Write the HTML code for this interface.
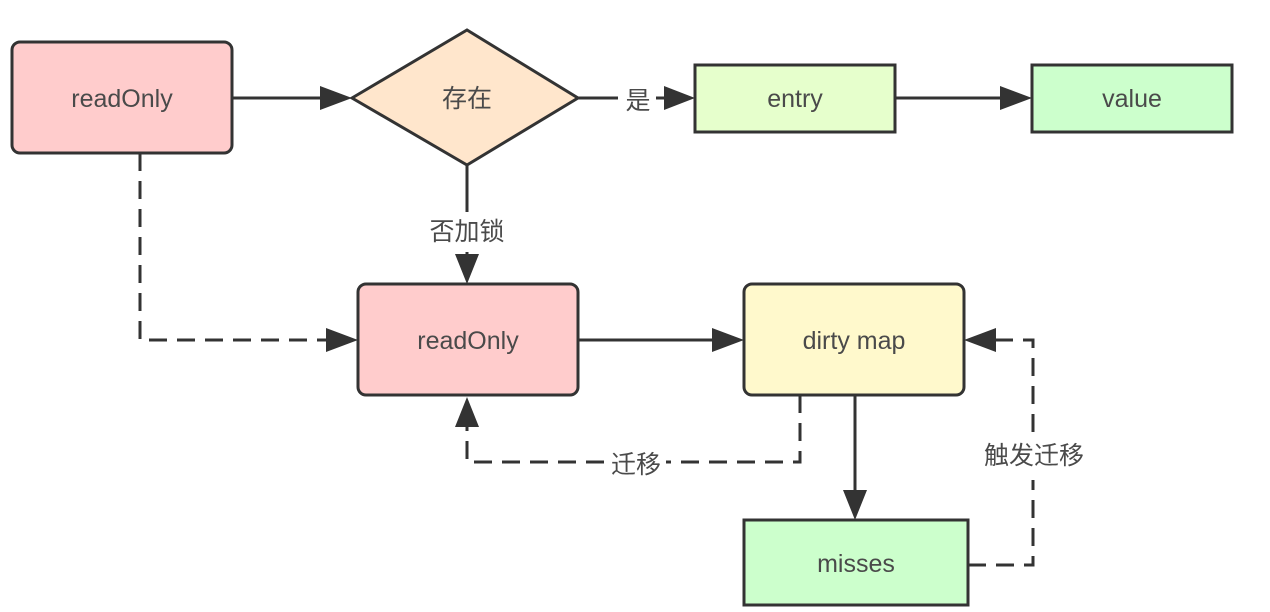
<!DOCTYPE html>
<html><head><meta charset="utf-8"><style>
html,body{margin:0;padding:0;background:#fff;}
svg{display:block}
text{font-family:"Liberation Sans","Noto Sans CJK SC",sans-serif;font-size:25px;fill:#4a4a4a;text-anchor:middle;dominant-baseline:central}
</style></head><body>
<svg width="1270" height="612" viewBox="0 0 1270 612" xmlns="http://www.w3.org/2000/svg">
<g stroke="#333" stroke-width="3">
<rect x="12" y="42" width="220" height="111" rx="8" fill="#ffcccc"/>
<polygon points="352,98 467,30 578,98 467,165" fill="#ffe6cc"/>
<rect x="695" y="65" width="200" height="67" fill="#e6ffcc"/>
<rect x="1032" y="65" width="200" height="67" fill="#ccffcc"/>
<rect x="358" y="284" width="220" height="111" rx="8" fill="#ffcccc"/>
<rect x="744" y="284" width="220" height="111" rx="8" fill="#fff9cc"/>
<rect x="744" y="520" width="224" height="85" fill="#ccffcc"/>
</g>
<g stroke="#333" stroke-width="3" fill="none">
<line x1="232" y1="98" x2="322" y2="98"/>
<line x1="578" y1="98" x2="618" y2="98"/>
<line x1="656" y1="98" x2="668" y2="98"/>
<line x1="895" y1="98" x2="1000" y2="98"/>
<line x1="467" y1="165" x2="467" y2="212"/>
<line x1="467" y1="252" x2="467" y2="256"/>
<line x1="578" y1="340" x2="714" y2="340"/>
<line x1="855" y1="395" x2="855" y2="490"/>
<g stroke-dasharray="18,10">
<polyline points="140,153 140,340 328,340"/>
<polyline points="800,395 800,462 666,462"/>
<polyline points="604,462 467,462 467,425"/>
<polyline points="968,565 1033,565 1033,480"/>
<polyline points="1033,432 1033,340 996,340"/>
</g>
</g>
<g fill="#333">
<polygon points="352,98 320,86 320,110"/>
<polygon points="695,98 664,86 664,110"/>
<polygon points="1032,98 1000,86 1000,110"/>
<polygon points="467,284 455,254 479,254"/>
<polygon points="358,340 326,328 326,352"/>
<polygon points="744,340 712,328 712,352"/>
<polygon points="855,520 843,490 867,490"/>
<polygon points="467,397 455,427 479,427"/>
<polygon points="964,340 996,328 996,352"/>
</g>
<text x="122" y="99">readOnly</text>
<text x="467" y="99">存在</text>
<text x="638" y="101">是</text>
<text x="795" y="99">entry</text>
<text x="1132" y="99">value</text>
<text x="467" y="232">否加锁</text>
<text x="468" y="341">readOnly</text>
<text x="854" y="341">dirty map</text>
<text x="856" y="564">misses</text>
<text x="636" y="465">迁移</text>
<text x="1034" y="456">触发迁移</text>
</svg>
</body></html>
